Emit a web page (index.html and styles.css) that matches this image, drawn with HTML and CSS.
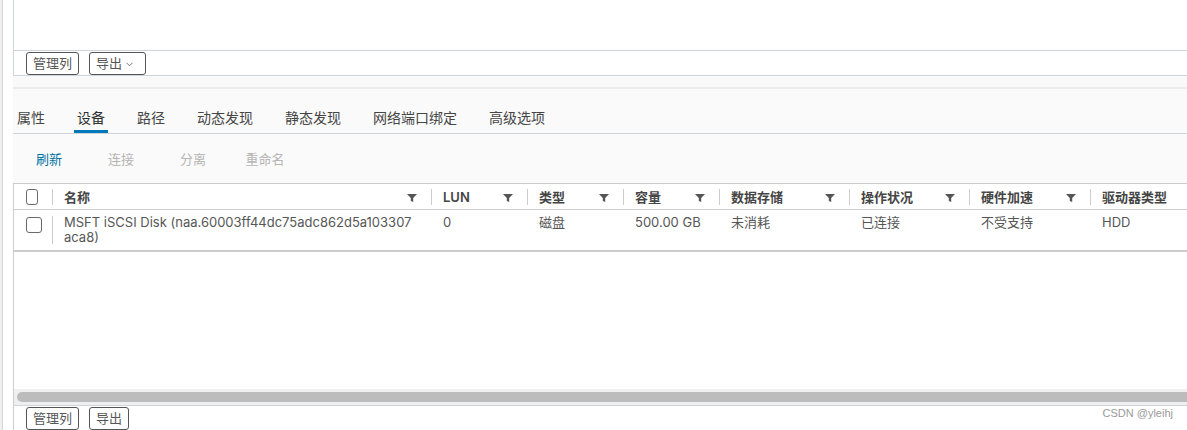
FILE: index.html
```html
<!DOCTYPE html>
<html lang="zh-CN">
<head>
<meta charset="utf-8">
<title>设备</title>
<link rel="stylesheet" href="styles.css">
</head>
<body>
<div class="app">
  <div class="rail"></div>
  <div class="main">
    <section class="panel-top">
      <div class="panel-blank"></div>
      <div class="panel-foot">
        <button class="btn">管理列</button>
        <button class="btn btn-drop">导出<svg class="chev" width="7" height="5" viewBox="0 0 7 5"><polyline points="0.5,0.8 3.5,3.8 6.5,0.8" fill="none" stroke="#777" stroke-width="1"/></svg></button>
      </div>
    </section>
    <div class="spacer"></div>
    <nav class="tabs">
      <span class="tab">属性</span>
      <span class="tab active">设备</span>
      <span class="tab">路径</span>
      <span class="tab">动态发现</span>
      <span class="tab">静态发现</span>
      <span class="tab">网络端口绑定</span>
      <span class="tab">高级选项</span>
    </nav>
    <div class="toolbar">
      <span class="tool primary">刷新</span>
      <span class="tool">连接</span>
      <span class="tool">分离</span>
      <span class="tool">重命名</span>
    </div>
    <div class="grid">
      <div class="grid-head">
        <div class="hcell check"><span class="box"></span></div>
        <div class="hcell"><span>名称</span><svg class="filter" width="10" height="8" viewBox="0 0 10 8"><path d="M0 0H10L6.2 4V8L3.8 7V4Z"/></svg></div>
        <div class="hcell"><span>LUN</span><svg class="filter" width="10" height="8" viewBox="0 0 10 8"><path d="M0 0H10L6.2 4V8L3.8 7V4Z"/></svg></div>
        <div class="hcell"><span>类型</span><svg class="filter" width="10" height="8" viewBox="0 0 10 8"><path d="M0 0H10L6.2 4V8L3.8 7V4Z"/></svg></div>
        <div class="hcell"><span>容量</span><svg class="filter" width="10" height="8" viewBox="0 0 10 8"><path d="M0 0H10L6.2 4V8L3.8 7V4Z"/></svg></div>
        <div class="hcell"><span>数据存储</span><svg class="filter" width="10" height="8" viewBox="0 0 10 8"><path d="M0 0H10L6.2 4V8L3.8 7V4Z"/></svg></div>
        <div class="hcell"><span>操作状况</span><svg class="filter" width="10" height="8" viewBox="0 0 10 8"><path d="M0 0H10L6.2 4V8L3.8 7V4Z"/></svg></div>
        <div class="hcell"><span>硬件加速</span><svg class="filter" width="10" height="8" viewBox="0 0 10 8"><path d="M0 0H10L6.2 4V8L3.8 7V4Z"/></svg></div>
        <div class="hcell"><span>驱动器类型</span></div>
      </div>
      <div class="grid-row">
        <div class="cell check"><span class="box"></span></div>
        <div class="cell name">MSFT iSCSI Disk (naa.60003ff44dc75adc862d5a103307<wbr>aca8)</div>
        <div class="cell">0</div>
        <div class="cell">磁盘</div>
        <div class="cell">500.00 GB</div>
        <div class="cell">未消耗</div>
        <div class="cell">已连接</div>
        <div class="cell">不受支持</div>
        <div class="cell">HDD</div>
      </div>
      <div class="grid-empty"></div>
      <div class="scrollbar"><div class="thumb"></div></div>
      <div class="grid-foot">
        <button class="btn">管理列</button>
        <button class="btn">导出</button>
      </div>
    </div>
  </div>
  <div class="watermark">CSDN @yleihj</div>
</div>
</body>
</html>
```

FILE: styles.css
```css
html, body {
  margin: 0;
  height: 430px;
  overflow: hidden;
}
body {
  background: #fafafa;
  font-family: Inter, "Noto Sans CJK SC", sans-serif;
  font-size: 13px;
  color: #565656;
}
.app {
  display: flex;
  height: 430px;
  position: relative;
}
.rail {
  flex: none;
  width: 2px;
  background: #efefef;
  border-right: 1px solid #d6d6d6;
}
.main {
  flex: 1;
  min-width: 0;
  padding-left: 10px;
  display: flex;
  flex-direction: column;
  overflow: hidden;
  background: #fff;
}
.panel-top {
  flex: none;
  background: #fff;
  border-left: 1px solid #cfd4d8;
  border-bottom: 1px solid #cfd4d8;
}
.panel-blank {
  height: 50px;
  border-bottom: 1px solid #cfd4d8;
}
.panel-foot {
  height: 24px;
  display: flex;
  align-items: flex-end;
  gap: 10px;
  padding-left: 12px;
}
.btn {
  box-sizing: border-box;
  height: 23px;
  padding: 0 6px;
  border: 1px solid #555;
  border-radius: 3px;
  background: #fff;
  font: inherit;
  font-size: 13px;
  color: #565656;
  display: inline-flex;
  align-items: center;
  line-height: 1;
}
.btn-drop {
  padding-right: 12px;
}
.chev {
  margin-left: 4px;
  margin-top: 1px;
}
.spacer {
  flex: none;
  height: 11px;
  background: #f9f9f9;
  border-bottom: 2px solid #ececec;
}
.tabs {
  flex: none;
  height: 44px;
  display: flex;
  align-items: flex-end;
  gap: 26px;
  padding-left: 1px;
  border-bottom: 1px solid #cfd4d8;
  background: #fafafa;
}
.tab {
  font-size: 14px;
  line-height: 20px;
  padding: 0 3px 2px;
  border-bottom: 3px solid transparent;
  color: #454545;
}
.tab.active {
  border-bottom-color: #0079b8;
  color: #313131;
}
.toolbar {
  flex: none;
  height: 49px;
  display: flex;
  align-items: center;
  background: #fafafa;
}
.tool {
  width: 72px;
  text-align: center;
  font-size: 13px;
  color: #b5b5b5;
}
.tool.primary {
  color: #0072a3;
}
.grid {
  flex: 1;
  min-height: 0;
  display: flex;
  flex-direction: column;
  background: #fff;
  border-left: 1px solid #ccc;
  border-top: 1px solid #ccc;
}
.grid-head,
.grid-row {
  display: grid;
  grid-template-columns: 38px 379px 96px 96px 96px 130px 120px 121px 130px;
}
.grid-head {
  flex: none;
  height: 25px;
  border-bottom: 1px solid #ccc;
}
.hcell {
  display: flex;
  align-items: center;
  justify-content: space-between;
  padding: 0 14px 0 12px;
  font-weight: 600;
  color: #454545;
  background: linear-gradient(#ccc, #ccc) left center / 1px 16px no-repeat;
  white-space: nowrap;
}
.hcell.check {
  background: none;
  padding-left: 12px;
}
.filter {
  fill: #555;
  margin-top: 2px;
}
.box {
  display: block;
  box-sizing: border-box;
  width: 16px;
  height: 16px;
  border: 1px solid #6a6a6a;
  border-radius: 3px;
  background: #fff;
}
.grid-row {
  flex: none;
  height: 40px;
  border-bottom: 2px solid #ccc;
}
.cell {
  padding: 5px 12px;
  line-height: 15px;
  color: #565656;
}
.cell.check {
  padding: 7px 0 0 12px;
}
.cell.name {
  padding-right: 6px;
  background: linear-gradient(#ccc, #ccc) left center / 1px 28px no-repeat;
}
.grid-empty {
  flex: 1;
}
.scrollbar {
  flex: none;
  height: 16px;
  background: #efefef;
  display: flex;
  align-items: center;
  padding-left: 3px;
}
.thumb {
  flex: 1;
  height: 10px;
  border-radius: 5px 0 0 5px;
  background: #bcbcbc;
}
.grid-foot {
  flex: none;
  height: 23px;
  border-top: 1px solid #cfd4d8;
  display: flex;
  gap: 10px;
  padding-left: 12px;
  padding-top: 1px;
  background: #fff;
}
.watermark {
  position: absolute;
  right: 14px;
  top: 407px;
  font-family: "Liberation Sans", Arial, sans-serif;
  font-size: 11px;
  color: #9a9a9a;
}
```
